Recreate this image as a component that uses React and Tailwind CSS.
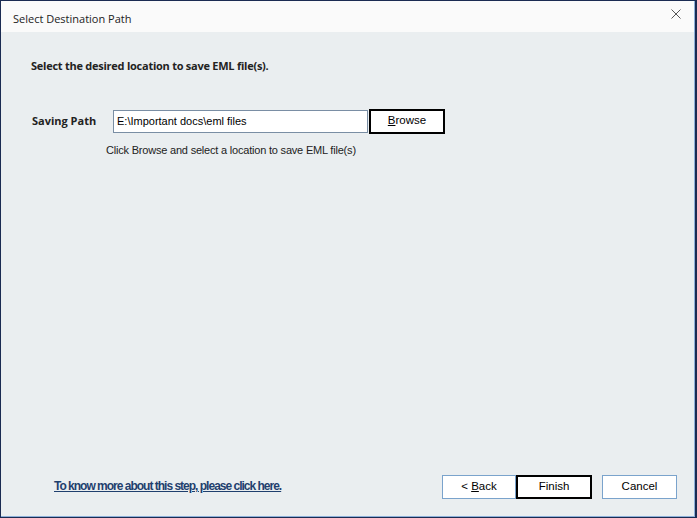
import React, { useState } from 'react';

const uiFont = { fontFamily: '"Open Sans", "Noto Sans", sans-serif' };
const winFont = { fontFamily: '"Liberation Sans", Arial, sans-serif' };

const Button = ({ children, primary, className = '' }) => (
  <button
    type="button"
    className={`h-[24px] bg-white text-[11.5px] text-black ${
      primary ? 'border-2 border-black' : 'border border-[#7aa3cc]'
    } ${className}`}
    style={winFont}
  >
    {children}
  </button>
);

export default function App() {
  const [path, setPath] = useState('E:\\Important docs\\eml files');

  return (
    <div className="w-[697px] h-[518px] bg-[#1a2b52] pl-px pt-px pr-[2px] pb-px">
      <div className="w-full h-full flex flex-col bg-[#eaeef0] border-r border-b border-[#8eb0d8]">
        {/* Title bar */}
        <div className="h-[31px] shrink-0 bg-[#fafafa] flex items-center justify-between pl-[12px] pr-[13px]">
          <span className="text-[11px] text-[#222] mt-[5px]" style={uiFont}>Select Destination Path</span>
          <svg width="10" height="10" viewBox="0 0 10 10" className="-mt-[5px]">
            <path d="M0.5 0.5 L9.5 9.5 M9.5 0.5 L0.5 9.5" stroke="#555" strokeWidth="1" />
          </svg>
        </div>

        {/* Body */}
        <div className="flex-1 flex flex-col">
          <p className="pl-[30px] pt-[26px] text-[11px] font-bold text-[#222] tracking-[-0.25px]" style={uiFont}>
            Select the desired location to save EML file(s).
          </p>

          <div className="flex items-center mt-[34px] pl-[31px]">
            <span className="w-[81px] text-[11px] font-bold text-[#222]" style={uiFont}>Saving Path</span>
            <input
              value={path}
              onChange={e => setPath(e.target.value)}
              className="w-[255px] h-[23px] bg-white border border-[#7a8ea4] px-[3px] text-[11px] text-black outline-none"
              style={winFont}
            />
            <Button primary className="w-[76px] ml-[1px] h-[25px]">
              <span className="underline">B</span>rowse
            </Button>
          </div>

          <p className="pl-[105px] mt-[8px] text-[11px] text-[#222] tracking-[-0.2px]" style={winFont}>
            Click Browse and select a location to save EML file(s)
          </p>

          <div className="flex-1" />

          {/* Footer */}
          <div className="flex items-center pl-[53px] pr-[17px] pb-[17px]">
            <a
              href="#"
              className="text-[12px] font-bold text-[#1f3f6e] underline tracking-[-1px] -mt-[2px]"
              style={winFont}
            >
              To know more about this step, please click here.
            </a>
            <div className="flex-1" />
            <Button className="w-[74px]">
              &lt; <span className="underline">B</span>ack
            </Button>
            <Button primary className="w-[76px]">Finish</Button>
            <Button className="w-[75px] ml-[10px]">Cancel</Button>
          </div>
        </div>
      </div>
    </div>
  );
}
